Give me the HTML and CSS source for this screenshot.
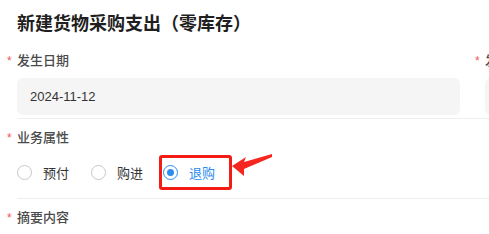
FILE: index.html
```html
<!DOCTYPE html>
<html lang="zh">
<head>
<meta charset="utf-8">
<link rel="stylesheet" href="styles.css">
</head>
<body>
<div class="page">
  <h1 class="title">新建货物采购支出（零库存）</h1>
  <div class="item row">
    <div class="col">
      <div class="label"><span class="req">*</span>发生日期</div>
      <div class="input">2024-11-12</div>
    </div>
    <div class="col">
      <div class="label"><span class="req">*</span>发生金额</div>
      <div class="input"></div>
    </div>
  </div>
  <div class="item item-radio">
    <div class="label"><span class="req">*</span>业务属性</div>
    <div class="radios">
      <span class="opt"><span class="circle"></span>预付</span>
      <span class="opt"><span class="circle"></span>购进</span>
      <span class="opt annot checked"><span class="circle"></span>退购</span>
      <svg class="arrow" width="44" height="30" viewBox="0 0 44 30"><polygon points="1,14 15,5 13,10 41,2 41,5 13,17 13,24" fill="#f5261f"/></svg>
    </div>
  </div>
  <div class="item">
    <div class="label"><span class="req">*</span>摘要内容</div>
  </div>
</div>
</body>
</html>
```
FILE: styles.css
```css
html, body {
  margin: 0;
  padding: 0;
  background: #fff;
  overflow: hidden;
}
body {
  width: 489px;
  height: 234px;
  font-family: "Liberation Sans", "Noto Sans CJK SC", sans-serif;
}
.page {
  padding-left: 17px;
}
.title {
  margin: 0;
  padding-top: 12px;
  font-size: 18px;
  line-height: 24px;
  font-weight: bold;
  color: #1f1f1f;
  height: 30px;
}
.item {
  padding-top: 10px;
  border-bottom: 1px solid #eee;
}
.row {
  display: flex;
  gap: 25px;
  padding-bottom: 3px;
  width: 1000px;
}
.col {
  width: 443px;
  flex: none;
}
.label {
  font-size: 13px;
  line-height: 18px;
  color: #4a4a4a;
  font-weight: 500;
  margin-bottom: 8px;
}
.req {
  display: inline-block;
  width: 13px;
  margin-left: -13px;
  color: #f2584d;
  font-size: 12px;
  text-indent: 3px;
}
.input {
  height: 37px;
  box-sizing: border-box;
  background: #f5f5f5;
  border-radius: 6px;
  padding-left: 13px;
  font-size: 13px;
  line-height: 37px;
  color: #333;
}
.item-radio {
  padding-bottom: 8px;
}
.radios {
  display: flex;
  align-items: center;
  height: 35px;
  position: relative;
}
.opt {
  display: flex;
  align-items: center;
  font-size: 13px;
  color: #333;
  margin-right: 22px;
}
.opt:nth-child(2) {
  margin-right: 16px;
}
.circle {
  width: 15px;
  height: 15px;
  box-sizing: border-box;
  border: 1px solid #c8c8c8;
  border-radius: 50%;
  margin-right: 11px;
  position: relative;
}
.annot {
  height: 35px;
  box-sizing: border-box;
  border: 3px solid #f41b14;
  border-radius: 3px;
  padding: 0 14px 0 1px;
}
.checked {
  color: #2d8cf0;
}
.checked .circle {
  border-color: #2d8cf0;
}
.checked .circle::after {
  content: "";
  position: absolute;
  left: 3px;
  top: 3px;
  width: 7px;
  height: 7px;
  border-radius: 50%;
  background: #2d8cf0;
}
.arrow {
  position: absolute;
  left: 214px;
  top: -3px;
}
```
